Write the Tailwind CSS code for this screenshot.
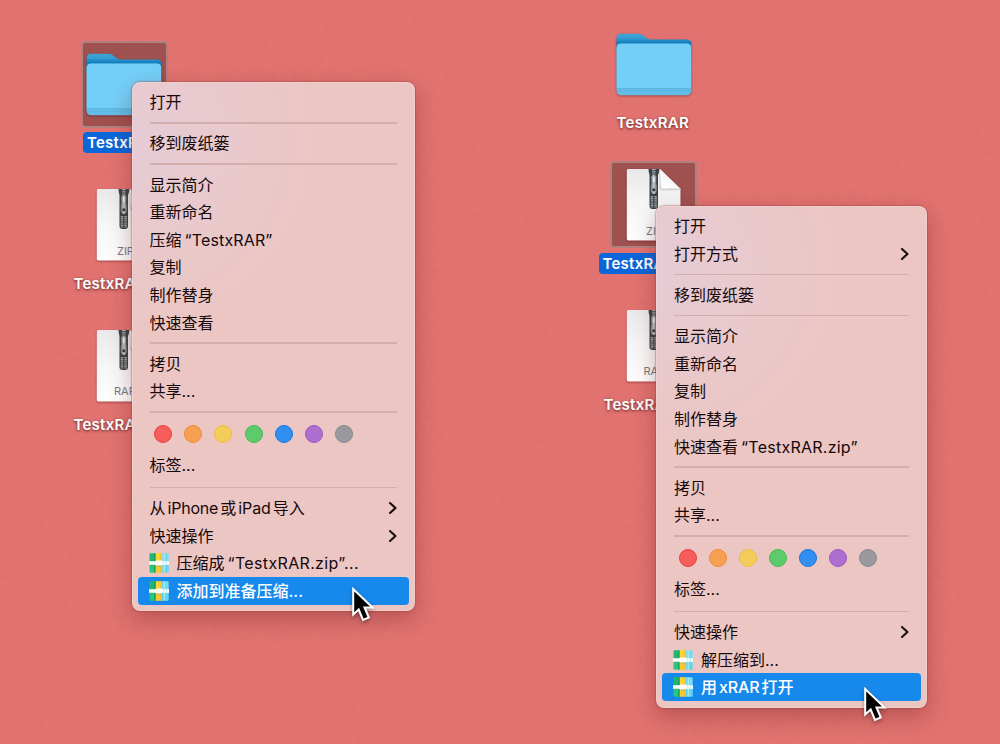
<!DOCTYPE html>
<html lang="zh-CN">
<head>
<meta charset="utf-8">
<title>xRAR</title>
<script src="https://cdn.jsdelivr.net/npm/@tailwindcss/browser@4"></script>
</head>
<body class="relative h-[744px] w-[1000px] overflow-hidden bg-[#e27371] font-['Inter','Noto_Sans_CJK_SC',sans-serif] text-[16px] text-[#17090b]">
<svg class="absolute h-0 w-0">
  <defs>
    <linearGradient id="fback" x1="0" y1="0" x2="0" y2="1"><stop offset="0" stop-color="#3fa5d6"/><stop offset=".22" stop-color="#369dd1"/><stop offset=".45" stop-color="#1280be"/></linearGradient>
    <linearGradient id="paper" x1="0" y1="0" x2="0" y2="1"><stop offset="0" stop-color="#e9e9e9"/><stop offset=".5" stop-color="#f6f6f6"/><stop offset="1" stop-color="#fdfdfd"/></linearGradient>
    <linearGradient id="fold" x1="0" y1="1" x2=".7" y2=".3"><stop offset="0" stop-color="#ffffff"/><stop offset=".6" stop-color="#f8f8f8"/><stop offset="1" stop-color="#dedede"/></linearGradient>
    <linearGradient id="metal" x1="0" x2="1"><stop offset="0" stop-color="#6b7276"/><stop offset=".5" stop-color="#c6cccf"/><stop offset="1" stop-color="#5d6468"/></linearGradient>
    <symbol id="folder" viewBox="0 0 76 64">
      <path d="M.5 20V5.500Q.5 .8 5 .8H22Q25.500 .8 28 3L31 5.200Q32.500 6.400 35 6.400H70.500Q75.300 6.400 75.300 11V20Z" fill="url(#fback)"/>
      <rect x=".5" y="10.500" width="74.800" height="51.800" rx="4.500" fill="#64bde8"/>
      <path d="M.8 15Q.8 10.800 5 10.800H71Q75 10.800 75 15V55H.8Z" fill="#74cff8"/>
      <path d="M1 55.500H75M1 58H75" stroke="#54acd7" stroke-width=".5"/>
    </symbol>
    <symbol id="doc" viewBox="0 0 56 74">
      <path d="M2 1H34L54.500 21V70.500Q54.500 72.500 52.500 72.500H2.500Q.8 72.500 .8 70.500V3Q.8 1 2 1Z" fill="url(#paper)"/>
      <path d="M33.500 1V20Q34 22.500 38 22.500L54.500 22V21Z" fill="#d3d3d3"/>
      <path d="M34 1L54.500 20.800Q44 19.500 37.500 20.800Q35 20.500 34.800 17Z" fill="url(#fold)"/>
      <path d="M22.500 1H33.500Q33 5 32 7V38Q32 41 29 41H26.500Q23.500 41 23.500 38V7Q22.500 4 22.500 1Z" fill="#3b4246"/>
      <path d="M27.800 1V8" stroke="#a8aeb1" stroke-width="3.500" stroke-dasharray="1.200 1"/>
      <path d="M26 28V39.500M29.600 28V39.500" stroke="#9da4a7" stroke-width="2.500" stroke-dasharray="1.200 .6"/>
      <path d="M25 8.500Q27.800 5.500 30.600 8.500L30.200 15Q31.500 18 31 22Q30.500 26 27.800 26T24.600 22Q24.400 18 25.400 15Z" fill="url(#metal)"/>
      <path d="M27.800 9V14" stroke="#edf1f3" stroke-width="1.500"/>
      <circle cx="27.800" cy="21.800" r="1.500" fill="#343b40"/>
    </symbol>
    <symbol id="app" viewBox="0 0 20 20">
      <path d="M.5 1Q.5 .2 1.500 .2H6.700V9.500H.5Z" fill="#23b571"/><path d="M.5 11H6.700V19.800H2Q.5 19.800 .5 18.500Z" fill="#2bc681"/>
      <path d="M6.700 .2H13.200V9.500H6.700Z" fill="#fdd432"/><path d="M6.700 11H13.200V19.800H6.700Z" fill="#f6c934"/>
      <path d="M13.200 .2H18.500Q19.700 .2 19.700 1.500V9.500H13.200Z" fill="#76dcf3"/><path d="M13.200 11H19.700V18.500Q19.700 19.800 18.500 19.800H13.200Z" fill="#65d6ed"/>
      <path d="M5.800 .5V9M5.800 12V19.500" stroke="#139d5f" stroke-width="1.200"/>
      <path d="M15.300 .5V9M15.300 12V19.500" stroke="#a3edf8" stroke-width="1.200"/>
      <path d="M11.800 .5V7M11.800 13V19.500" stroke="#eeb92c" stroke-width="1"/>
      <rect x="0" y="8.200" width="20" height="3.700" fill="#f8fdfa"/>
      <rect x="6.500" y="7.600" width="7" height="5.200" rx="1" fill="#fffdf5"/>
      <path d="M7.500 12.900H13M.5 12.200H6.500" stroke="#4e9b73" stroke-width=".5"/>
      <path d="M14.800 8.200V11.900M17.500 8.200V11.900" stroke="#b5dedd" stroke-width=".7"/>
    </symbol>
    <symbol id="chev" viewBox="0 0 10 14"><path d="M2 2L7.500 7L2 12" fill="none" stroke="#160b0d" stroke-width="2.100" stroke-linecap="round" stroke-linejoin="round"/></symbol>
    <symbol id="cursor" viewBox="0 0 24 36"><path d="M2.200 2V27.500L7.700 22.500L12 33L17.800 30.500L13.500 20.500H21.500Z" fill="#030303" stroke="#fff" stroke-width="2"/></symbol>
    <filter id="grain" x="0" y="0" width="100%" height="100%"><feTurbulence type="fractalNoise" baseFrequency=".16" numOctaves="3" seed="4"/><feColorMatrix values="0 0 0 0 .45  0 0 0 0 .1  0 0 0 0 .1  .5 .5 0 0 -.38"/></filter>
  </defs>
</svg>
<svg class="absolute inset-0 h-full w-full opacity-20"><rect width="1000" height="744" filter="url(#grain)"/></svg>

<!-- Desktop items, left -->
<div class="absolute left-[80.500px] top-[40.500px] h-[87px] w-[87px] rounded-[4px] border-2 border-[#b0807e] bg-[#9f5150]"></div>
<svg class="absolute left-[86.300px] top-[53.300px] h-[64px] w-[76px] drop-shadow-[0_1px_1px_rgba(80,0,0,0.4)]"><use href="#folder"/></svg>
<div class="absolute left-[83px] top-[132px] h-[21px] w-[49px] overflow-hidden whitespace-nowrap rounded-l-[4px] bg-[#0b67d9] px-1 text-[15px] font-semibold leading-[21px] tracking-[0.25px] text-white">TestxR</div>
<svg class="absolute left-[96.300px] top-[188px] h-[74px] w-[56px] drop-shadow-[0_1px_1px_rgba(80,0,0,0.4)]"><use href="#doc"/></svg>
<div class="absolute left-[117px] top-[245px] w-[15px] overflow-hidden text-[11px] leading-[12px] text-[#77797b]">ZIP</div>
<div class="absolute left-[73.500px] top-[273px] w-[58.500px] text-[15px] font-semibold leading-[21px] tracking-[0.25px] text-white [text-shadow:0_1px_3px_rgba(50,0,0,0.75)]">TestxRA</div>
<svg class="absolute left-[96.300px] top-[328.500px] h-[74px] w-[56px] drop-shadow-[0_1px_1px_rgba(80,0,0,0.4)]"><use href="#doc"/></svg>
<div class="absolute left-[114px] top-[384.500px] w-[18px] overflow-hidden text-[11px] leading-[12px] text-[#77797b]">RAR</div>
<div class="absolute left-[73.500px] top-[413.500px] w-[58.500px] text-[15px] font-semibold leading-[21px] tracking-[0.25px] text-white [text-shadow:0_1px_3px_rgba(50,0,0,0.75)]">TestxRA</div>

<!-- Desktop items, right -->
<svg class="absolute left-[616px] top-[33.300px] h-[64px] w-[76px] drop-shadow-[0_1px_1px_rgba(80,0,0,0.4)]"><use href="#folder"/></svg>
<div class="absolute left-[616.500px] top-[112px] text-[15px] font-semibold leading-[21px] tracking-[0.3px] text-white [text-shadow:0_1px_3px_rgba(50,0,0,0.75)]">TestxRAR</div>
<div class="absolute left-[610px] top-[161px] h-[87px] w-[87px] rounded-[4px] border-2 border-[#b0807e] bg-[#9f5150]"></div>
<svg class="absolute left-[626px] top-[168px] h-[74px] w-[56px] drop-shadow-[0_1px_1px_rgba(80,0,0,0.4)]"><use href="#doc"/></svg>
<div class="absolute left-[646px] top-[225px] w-[10px] overflow-hidden text-[11px] leading-[12px] text-[#77797b]">ZI</div>
<div class="absolute left-[598.500px] top-[253px] h-[21px] w-[57.500px] overflow-hidden whitespace-nowrap rounded-l-[4px] bg-[#0b67d9] pl-1 text-[15px] font-semibold leading-[21px] tracking-[0.25px] text-white">TestxRA</div>
<svg class="absolute left-[626px] top-[308.500px] h-[74px] w-[56px] drop-shadow-[0_1px_1px_rgba(80,0,0,0.4)]"><use href="#doc"/></svg>
<div class="absolute left-[643.500px] top-[364.500px] w-[12.500px] overflow-hidden text-[11px] leading-[12px] text-[#77797b]">RA</div>
<div class="absolute left-[603.500px] top-[393.500px] w-[52.500px] overflow-hidden whitespace-nowrap text-[15px] font-semibold leading-[21px] tracking-[0.25px] text-white [text-shadow:0_1px_3px_rgba(50,0,0,0.75)]">TestxRA</div>

<!-- Folder context menu -->
<div class="absolute left-[132px] top-[82px] flex h-[528.500px] w-[283px] flex-col rounded-[8px] bg-[#ebc6c3] bg-[radial-gradient(circle_at_0_60px,#e6ccd6_0,#ebc6c3_190px)] px-[6px] pt-[6.500px] shadow-[0_0_1px_1px_rgba(150,60,60,0.35),0_8px_22px_rgba(90,20,20,0.32),inset_0_0_0_1px_rgba(255,225,220,0.35)] [&>div]:flex [&>div]:h-[27.6px] [&>div]:shrink-0 [&>div]:items-center [&>div]:whitespace-pre [&>div]:px-[12px] [&>div]:pl-[11.500px] [&>hr]:mx-[12px] [&>hr]:my-[6px] [&>hr]:h-[1.6px] [&>hr]:shrink-0 [&>hr]:border-0 [&>hr]:bg-[#d3aeac]">
  <div>打开</div>
  <hr>
  <div>移到废纸篓</div>
  <hr>
  <div>显示简介</div>
  <div>重新命名</div>
  <div>压缩<span class="ml-[3px] tracking-[0.15px]">“TestxRAR”</span></div>
  <div>复制</div>
  <div>制作替身</div>
  <div>快速查看</div>
  <hr>
  <div>拷贝</div>
  <div>共享...</div>
  <hr>
  <section class="flex h-[32.700px] shrink-0 gap-[12.100px] pl-[16.300px] pt-[6px] [&>i]:size-[18px] [&>i]:rounded-full [&>i]:border-[1.500px]">
    <i class="border-[#e4413f] bg-[#f65d5b]"></i><i class="border-[#ee8b35] bg-[#f6a051]"></i><i class="border-[#edbd43] bg-[#f4cc5a]"></i><i class="border-[#46b957] bg-[#5dcb6b]"></i><i class="border-[#1878df] bg-[#328ff2]"></i><i class="border-[#9858bd] bg-[#ad70d0]"></i><i class="border-[#87888c] bg-[#99999d]"></i>
  </section>
  <div class="mb-[1.500px]">标签...</div>
  <hr>
  <div>从<span class="ml-[2px] mr-[2px] tracking-[-0.2px]">iPhone</span>或<span class="ml-[2px] mr-[2px] tracking-[-0.1px]">iPad</span>导入<svg class="-mr-px ml-auto h-[14px] w-[10px]"><use href="#chev"/></svg></div>
  <div>快速操作<svg class="-mr-px ml-auto h-[14px] w-[10px]"><use href="#chev"/></svg></div>
  <div><svg class="-ml-px mr-[8px] size-[20px]"><use href="#app"/></svg>压缩成<span class="ml-[3px] tracking-[0.35px]">“TestxRAR.zip”...</span></div>
  <div class="rounded-[4px] bg-[#1789ec] font-medium text-white"><svg class="-ml-px mr-[8px] size-[20px]"><use href="#app"/></svg>添加到准备压缩...</div>
</div>

<!-- Archive context menu -->
<div class="absolute left-[656px] top-[206px] flex h-[501.500px] w-[271px] flex-col rounded-[8px] bg-[#ebc6c3] bg-[radial-gradient(circle_at_0_60px,#e6ccd6_0,#ebc6c3_190px)] px-[6px] pt-[6.500px] shadow-[0_0_1px_1px_rgba(150,60,60,0.35),0_8px_22px_rgba(90,20,20,0.32),inset_0_0_0_1px_rgba(255,225,220,0.35)] [&>div]:flex [&>div]:h-[27.6px] [&>div]:shrink-0 [&>div]:items-center [&>div]:whitespace-pre [&>div]:px-[12px] [&>hr]:mx-[12px] [&>hr]:my-[6px] [&>hr]:h-[1.6px] [&>hr]:shrink-0 [&>hr]:border-0 [&>hr]:bg-[#d3aeac]">
  <div>打开</div>
  <div>打开方式<svg class="-mr-px ml-auto h-[14px] w-[10px]"><use href="#chev"/></svg></div>
  <hr>
  <div>移到废纸篓</div>
  <hr>
  <div>显示简介</div>
  <div>重新命名</div>
  <div>复制</div>
  <div>制作替身</div>
  <div>快速查看<span class="ml-[3px] tracking-[0.25px]">“TestxRAR.zip”</span></div>
  <hr>
  <div>拷贝</div>
  <div>共享...</div>
  <hr>
  <section class="flex h-[32.700px] shrink-0 gap-[12.100px] pl-[16.700px] pt-[6px] [&>i]:size-[18px] [&>i]:rounded-full [&>i]:border-[1.500px]">
    <i class="border-[#e4413f] bg-[#f65d5b]"></i><i class="border-[#ee8b35] bg-[#f6a051]"></i><i class="border-[#edbd43] bg-[#f4cc5a]"></i><i class="border-[#46b957] bg-[#5dcb6b]"></i><i class="border-[#1878df] bg-[#328ff2]"></i><i class="border-[#9858bd] bg-[#ad70d0]"></i><i class="border-[#87888c] bg-[#99999d]"></i>
  </section>
  <div class="mb-[1.500px]">标签...</div>
  <hr>
  <div>快速操作<svg class="-mr-px ml-auto h-[14px] w-[10px]"><use href="#chev"/></svg></div>
  <div><svg class="-ml-px mr-[8px] size-[20px]"><use href="#app"/></svg>解压缩到...</div>
  <div class="rounded-[4px] bg-[#1789ec] font-medium text-white"><svg class="-ml-px mr-[8px] size-[20px]"><use href="#app"/></svg>用<span class="mx-[2px] tracking-[-0.1px]">xRAR</span>打开</div>
</div>

<svg class="absolute left-[351px] top-[587px] h-[36px] w-[24px] drop-shadow-[0_2px_2px_rgba(0,0,0,0.35)]"><use href="#cursor"/></svg>
<svg class="absolute left-[863px] top-[687px] h-[36px] w-[24px] drop-shadow-[0_2px_2px_rgba(0,0,0,0.35)]"><use href="#cursor"/></svg>
</body>
</html>
